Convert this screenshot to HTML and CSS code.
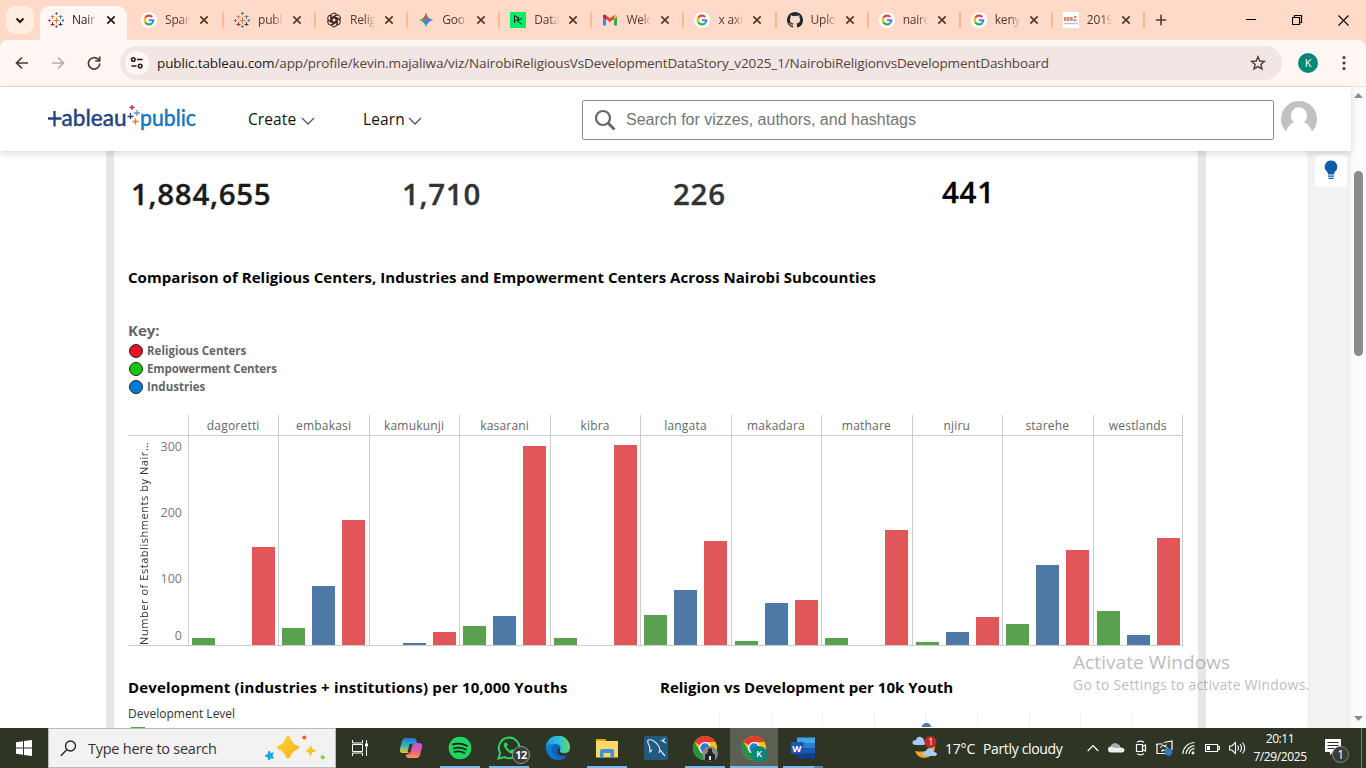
FILE: index.html
```html
<!DOCTYPE html>
<html lang="en">
<head>
<meta charset="utf-8">
<title>Nairobi Religion vs Development Dashboard</title>
<link rel="stylesheet" href="styles.css">
</head>
<body>
<svg class="defs" aria-hidden="true">
  <symbol id="x" viewBox="0 0 10 10"><path d="M1.300 1.300l7.400 7.400M8.700 1.300L1.300 8.700" stroke="currentColor" stroke-width="1.700"/></symbol>
  <symbol id="tab" viewBox="0 0 16 16"><g fill="none" stroke-width="1"><path d="M8.500 5.500v6M5.500 8.500h6" stroke="#e8762d"/><path d="M4.500 3v4M2.500 4.500h4" stroke="#d98b4d"/><path d="M12.500 3v4M10.500 4.500h4" stroke="#59879b"/><path d="M4.500 10v4M2.500 12.500h4" stroke="#c72035"/><path d="M12.500 10v4M10.500 12.500h4" stroke="#1f457e"/><path d="M8.500 0v3M7 1.500h3M15 7v3M13.500 8.500h2.500" stroke="#5f7290"/><path d="M1.500 7v3M0 8.500h3M8.500 13v3M7 14.500h3" stroke="#6b7e99"/></g></symbol>
  <symbol id="g" viewBox="0 0 48 48"><circle cx="24" cy="24" r="24" fill="#fff"/><g fill="none" stroke-width="6.500"><path d="M33.500 15A13 13 0 0 0 12.700 17.500" stroke="#ea4335"/><path d="M12.700 17.500a13 13 0 0 0 0 13" stroke="#fbbc05"/><path d="M12.700 30.500A13 13 0 0 0 33 33.500" stroke="#34a853"/><path d="M33 33.500A13 13 0 0 0 37 24.700H24" stroke="#4285f4"/></g></symbol>
  <symbol id="chrome" viewBox="0 0 24 24"><circle cx="12" cy="12" r="12" fill="#fbc116"/><path d="M12 12L1.600 6A12 12 0 0 1 22.400 6H12z" fill="#e33b2e"/><path d="M1.600 6A12 12 0 0 0 12 24l5.200-9L6.800 15z" fill="#229342"/><path d="M12 6h10.400l-3 5z" fill="#fbc116"/><circle cx="12" cy="12" r="6" fill="#fff"/><circle cx="12" cy="12" r="4.700" fill="#2b78e8"/></symbol>
</svg>

<header class="tabstrip">
  <div class="tab-search"><svg width="10" height="7" viewBox="0 0 10 7"><path d="M1.500 1.500L5 5l3.500-3.500" fill="none" stroke="#221a15" stroke-width="2"/></svg></div>
  <div class="tab active"><svg class="fav"><use href="#tab"/></svg><span>Nair</span><svg class="close"><use href="#x"/></svg></div>
  <div class="tab"><svg class="fav"><use href="#g"/></svg><span>Spar</span><svg class="close"><use href="#x"/></svg></div>
  <div class="tab"><svg class="fav"><use href="#tab"/></svg><span>publ</span><svg class="close"><use href="#x"/></svg></div>
  <div class="tab"><svg class="fav" viewBox="0 0 16 16"><g fill="none" stroke="#3e3029" stroke-width="1.100"><path id="petal" d="M5 9.700V4.200a3 3 0 0 1 5.600-1.500L6 5.500v5"/><use href="#petal" transform="rotate(60 8 8)"/><use href="#petal" transform="rotate(120 8 8)"/><use href="#petal" transform="rotate(180 8 8)"/><use href="#petal" transform="rotate(240 8 8)"/><use href="#petal" transform="rotate(300 8 8)"/></g></svg><span>Relig</span><svg class="close"><use href="#x"/></svg></div>
  <div class="tab"><svg class="fav" viewBox="0 0 16 16"><defs><linearGradient id="gem" x1="0" y1="0.300" x2="1" y2="0.600"><stop offset="0" stop-color="#f4c12c"/><stop offset=".35" stop-color="#39a36a"/><stop offset=".6" stop-color="#3b83f2"/><stop offset="1" stop-color="#4b7df0"/></linearGradient></defs><path d="M8 .5Q9.200 6.800 15.500 8 9.200 9.200 8 15.500 6.800 9.200.5 8 6.800 6.800 8 .5z" fill="url(#gem)"/><path d="M8 .5Q9.200 6.800 11 7L8 8 6 6Q7.600 4 8 .5z" fill="#e8504a"/></svg><span>Goo</span><svg class="close"><use href="#x"/></svg></div>
  <div class="tab"><svg class="fav" viewBox="0 0 16 16"><path d="M0 0h16v16H0z" fill="#03ef62"/><path d="M4.500 11V3.500L9 6.300 5 9M12 6.200L7.500 9l4.500 3.500M8.500 5v4" fill="none" stroke="#05192d"/></svg><span>Data</span><svg class="close"><use href="#x"/></svg></div>
  <div class="tab"><svg class="fav" viewBox="0 0 16 16"><path d="M1 4v9.500h3V7z" fill="#4285f4"/><path d="M12 7v6.500h3V4z" fill="#34a853"/><path d="M1 5V3.500Q2 2 4 3.200L8 6.300l4-3.100V7l-4 3-4-3z" fill="#ea4335"/><path d="M12 3.200Q14 2 15 3.500V5l-3 2.200z" fill="#fbbc04"/><path d="M1 5V3.500Q2 2 4 3.200v4z" fill="#c5221f"/></svg><span>Welc</span><svg class="close"><use href="#x"/></svg></div>
  <div class="tab"><svg class="fav"><use href="#g"/></svg><span>x axi</span><svg class="close"><use href="#x"/></svg></div>
  <div class="tab"><svg class="fav" viewBox="0 0 16 16"><path fill="#24292f" d="M8 0C3.580 0 0 3.580 0 8c0 3.540 2.290 6.530 5.470 7.590.4.070.55-.17.55-.38 0-.19-.01-.82-.01-1.490-2.010.37-2.530-.49-2.690-.94-.09-.23-.48-.94-.82-1.130-.28-.15-.68-.52-.01-.53.63-.01 1.080.58 1.230.82.72 1.210 1.870.87 2.330.66.07-.52.28-.87.51-1.070-1.780-.2-3.640-.89-3.640-3.950 0-.87.31-1.590.82-2.150-.08-.2-.36-1.020.08-2.120 0 0 .67-.21 2.200.82a7.600 7.600 0 0 1 4 0c1.530-1.040 2.200-.82 2.200-.82.44 1.100.16 1.920.08 2.120.51.56.82 1.270.82 2.150 0 3.070-1.870 3.750-3.650 3.950.29.25.54.73.54 1.480 0 1.070-.01 1.930-.01 2.200 0 .21.15.46.55.38A8.010 8.010 0 0 0 16 8c0-4.420-3.580-8-8-8z"/></svg><span>Uplo</span><svg class="close"><use href="#x"/></svg></div>
  <div class="tab"><svg class="fav"><use href="#g"/></svg><span>nairo</span><svg class="close"><use href="#x"/></svg></div>
  <div class="tab"><svg class="fav"><use href="#g"/></svg><span>keny</span><svg class="close"><use href="#x"/></svg></div>
  <div class="tab"><svg class="fav" viewBox="0 0 16 16"><path d="M0 0h16v16H0z" fill="#fff"/><path d="M1 6h9M1 8h13M11 5h3" stroke="#c9664f" stroke-width="1.600" stroke-dasharray="2.500 .6"/><path d="M1 11.500h14" stroke="#c0c5c9" stroke-width="1.500"/></svg><span>2019</span><svg class="close"><use href="#x"/></svg></div>
  <svg class="newtab" viewBox="0 0 12 12"><path d="M6 .8v10.400M.8 6h10.400" stroke="#54382a" stroke-width="1.600"/></svg>
  <div class="winctl">
    <svg width="11" height="11"><path d="M0 4.500h10" stroke="#000"/></svg>
    <svg width="11" height="11"><path d="M.5 2.500h7v7h-7zM2.500 2.500v-2h7v7h-2" fill="none" stroke="#000" stroke-width="1.200"/></svg>
    <svg width="11" height="11"><path d="M.5.5l10 10M10.500.5l-10 10" stroke="#000" stroke-width="1.100"/></svg>
  </div>
</header>

<div class="toolbar-wrap">
<div class="toolbar">
  <svg class="nav" viewBox="0 0 16 16"><path d="M14 8H3M8 2.500L2.500 8 8 13.500" fill="none" stroke="#54382a" stroke-width="1.700"/></svg>
  <svg class="nav" viewBox="0 0 16 16"><path d="M2 8h11M8 2.500L13.500 8 8 13.500" fill="none" stroke="#b9aca7" stroke-width="1.700"/></svg>
  <svg class="nav" viewBox="0 0 16 16"><path d="M13.800 8.500A5.700 5.700 0 1 1 12 4.200l1.300 1.200M13.700 1.500V6H9.200" fill="none" stroke="#54382a" stroke-width="1.700"/></svg>
  <div class="omnibox">
    <div class="site"><svg width="14" height="14" viewBox="0 0 14 14"><g fill="none" stroke="#221a15" stroke-width="1.500"><circle cx="3.300" cy="3.500" r="1.800"/><path d="M7 3.500h5.500M1.500 10h5"/><circle cx="10.200" cy="10" r="1.800"/></g></svg></div>
    <span class="url"><b>public.tableau.com</b>/app/profile/kevin.majaliwa/viz/NairobiReligiousVsDevelopmentDataStory_v2025_1/NairobiReligionvsDevelopmentDashboard</span>
    <svg class="star" viewBox="0 0 16 16"><path d="M8 1.800l1.800 4.200 4.600.4-3.500 3 1.100 4.500L8 11.500l-4 2.400 1.100-4.500-3.500-3 4.600-.4z" fill="none" stroke="#54433b" stroke-width="1.500"/></svg>
  </div>
  <div class="profile">K</div>
  <svg class="menu" viewBox="0 0 4 16"><g fill="#54382a"><circle cx="2" cy="2.500" r="1.600"/><circle cx="2" cy="8" r="1.600"/><circle cx="2" cy="13.500" r="1.600"/></g></svg>
</div>
</div>

<div class="page">
  <div class="site-col">
    <div class="site-header">
      <svg class="logo" viewBox="0 0 150 30">
        <path d="M0 14.500h13.500M6.500 7v15.500" stroke="#1f457e" stroke-width="2.300"/>
        <text class="lt" x="13.500" y="22" textLength="65" lengthAdjust="spacingAndGlyphs" fill="#1f457e" stroke="#1f457e">ableau</text>
        <text class="lt" x="92" y="22" textLength="56" lengthAdjust="spacingAndGlyphs" fill="#1b75bb" stroke="#1b75bb">public</text>
        <g fill="none" stroke-width="1.300"><path d="M84 1v5M81.500 3.500h5" stroke="#c72035"/><path d="M89 6v6M86 9h6" stroke="#5a9bc0"/><path d="M82.500 9v6M79.500 12.500h6" stroke="#1f457e"/><path d="M87.500 14.500v6M84.500 17.500h6" stroke="#e8762d"/></g>
      </svg>
      <span class="navlink create">Create</span><svg class="chev" viewBox="0 0 14 8"><path d="M1 1l6 6 6-6" fill="none" stroke="#555" stroke-width="1.300"/></svg>
      <span class="navlink learn">Learn</span><svg class="chev" viewBox="0 0 14 8"><path d="M1 1l6 6 6-6" fill="none" stroke="#555" stroke-width="1.300"/></svg>
      <div class="search"><svg width="22" height="22" viewBox="0 0 22 22"><circle cx="9" cy="9" r="7" fill="none" stroke="#666" stroke-width="2.200"/><path d="M14 14l6.500 6.500" stroke="#666" stroke-width="2.800"/></svg><span>Search for vizzes, authors, and hashtags</span></div>
      <svg class="avatar" viewBox="0 0 36 36"><circle cx="18" cy="18" r="18" fill="#c1c1c1"/><circle cx="18" cy="14.500" r="8.200" fill="#fff"/><path d="M4.500 31.500Q8 22 14 21h8q6 1 9.500 10.500L29 36H7z" fill="#fff"/></svg>
    </div>
    <main class="viewer">
      <section class="dash">
        <div class="kpis"><span class="k1">1,884,655</span><span class="k2">1,710</span><span class="k3">226</span><span class="k4">441</span></div>
        <h2 class="t1">Comparison of Religious Centers, Industries and Empowerment Centers Across Nairobi Subcounties</h2>
        <div class="key">
          <div class="key-title">Key:</div>
          <div><i class="red"></i><span class="l1">Religious Centers</span></div>
          <div><i class="green"></i><span class="l2">Empowerment Centers</span></div>
          <div><i class="blue"></i><span class="l3">Industries</span></div>
        </div>
        <div class="chart">
          <div class="axis">
            <div class="ylabel"><span>Number of Establishments by Nair…</span></div>
            <div class="ticks"><span>300</span><span>200</span><span>100</span><span class="zero">0</span></div>
          </div>
          <div class="cols">
            <div class="col"><h4>dagoretti</h4><div class="bars"><i style="height:7px"></i><i style="height:0"></i><i style="height:98px"></i></div></div>
            <div class="col"><h4>embakasi</h4><div class="bars"><i style="height:17px"></i><i style="height:59px"></i><i style="height:125px"></i></div></div>
            <div class="col"><h4>kamukunji</h4><div class="bars"><i style="height:0"></i><i style="height:2px"></i><i style="height:13px"></i></div></div>
            <div class="col"><h4>kasarani</h4><div class="bars"><i style="height:19px"></i><i style="height:29px"></i><i style="height:199px"></i></div></div>
            <div class="col"><h4>kibra</h4><div class="bars"><i style="height:7px"></i><i style="height:0"></i><i style="height:200px"></i></div></div>
            <div class="col"><h4>langata</h4><div class="bars"><i style="height:30px"></i><i style="height:55px"></i><i style="height:104px"></i></div></div>
            <div class="col"><h4>makadara</h4><div class="bars"><i style="height:4px"></i><i style="height:42px"></i><i style="height:45px"></i></div></div>
            <div class="col"><h4>mathare</h4><div class="bars"><i style="height:7px"></i><i style="height:0"></i><i style="height:115px"></i></div></div>
            <div class="col"><h4>njiru</h4><div class="bars"><i style="height:3px"></i><i style="height:13px"></i><i style="height:28px"></i></div></div>
            <div class="col"><h4>starehe</h4><div class="bars"><i style="height:21px"></i><i style="height:80px"></i><i style="height:95px"></i></div></div>
            <div class="col"><h4>westlands</h4><div class="bars"><i style="height:34px"></i><i style="height:10px"></i><i style="height:107px"></i></div></div>
          </div>
        </div>
        <div class="lower">
          <div class="lower-left">
            <h2 class="t2">Development (industries + institutions) per 10,000 Youths</h2>
            <div class="level">Development Level</div>
            <div class="swatch"></div>
          </div>
          <div class="lower-right">
            <h2 class="t3">Religion vs Development per 10k Youth</h2>
            <svg class="scatter" width="520" height="16"><path d="M59.500 0v16M111.500 0v16M162.500 0v16M214.500 0v16M265.500 0v16M317.500 0v16M369.500 0v16M420.500 0v16M472.500 0v16" stroke="#f0f0f0"/><circle cx="266.500" cy="17" r="5" fill="#4e79a7"/></svg>
          </div>
        </div>
      </section>
      <aside class="panel"><div class="bulb"><svg width="14" height="20" viewBox="0 0 14 20"><path d="M7 .5a6.300 6.300 0 0 0-3.800 11.300Q3.800 12.500 4 14.500h6q.2-2 .8-2.700A6.300 6.300 0 0 0 7 .5z" fill="#0b5cab"/><path d="M4 16.200h6M4.500 18.400h5" stroke="#0b5cab" stroke-width="1.200"/></svg></div></aside>
    </main>
  </div>
  <div class="scrollbar">
    <svg width="9" height="5"><path d="M0 5L4.500 0 9 5z" fill="#8b8b8b"/></svg>
    <div class="track"><div class="thumb"></div></div>
    <svg width="9" height="5"><path d="M0 0h9L4.500 5z" fill="#8b8b8b"/></svg>
  </div>
</div>
<div class="watermark"><p class="w1">Activate Windows</p><p class="w2">Go to Settings to activate Windows.</p></div>

<footer class="taskbar">
  <div class="start"><svg width="16" height="16" viewBox="0 0 16 16"><path d="M0 2.200L7 1.200v6.300H0zM8 1.100L16 0v7.500H8zM0 8.500h7v6.300l-7-1zM8 8.500h8V16l-8-1.100z" fill="#fff"/></svg></div>
  <div class="tsearch">
    <svg width="17" height="17" viewBox="0 0 17 17"><circle cx="10.500" cy="6" r="5" fill="none" stroke="#222" stroke-width="1.300"/><path d="M7 9.500L.8 15.700" stroke="#222" stroke-width="1.300"/></svg>
    <span>Type here to search</span>
    <svg width="62" height="26" viewBox="0 0 62 26"><defs><linearGradient id="gold" x2="1" y2="1"><stop offset="0" stop-color="#ffd83d"/><stop offset="1" stop-color="#f5ad16"/></linearGradient></defs><path d="M24 .5q1.500 0 2 2 2 6 8 8.500 3 1.500 0 3-6 2.500-8 8-2 3.500-4 0-2-5.500-8-8-3-1.500 0-3 6-2.500 8-8.500.5-2 2-2z" fill="url(#gold)"/><path d="M46.500 10l1.800 3.800 4 1.900-4 1.900-1.800 4.200-1.800-4.200-4-1.900 4-1.900z" fill="url(#gold)"/><path d="M5 16l1.500 2.500 2.800-.6L8 20.500l1.500 2.700-2.700-.4L4.700 25l-.5-2.700L1 20.800l3-1.400z" fill="#14a4ea" stroke="#14a4ea"/><circle cx="40.300" cy="2.500" r="2.100" fill="#f0622c"/><circle cx="58.700" cy="22.300" r="2.100" fill="#8bcf4a"/></svg>
  </div>
  <div class="tb"><svg width="16" height="16" viewBox="0 0 16 16"><path d="M.5 0v3h10V0M.5 16v-3h10v3M.5 4.500h10v7H.5zM14.500 0v4M14.500 7v9" fill="none" stroke="#fff"/><path d="M13 3.500h3v3h-3z" fill="#fff"/></svg></div>
  <div class="apps">
    <div class="app"><svg width="24" height="24" viewBox="0 0 24 24"><defs><linearGradient id="cpa" x2="0" y2="1"><stop offset="0" stop-color="#1a75e0"/><stop offset=".5" stop-color="#31b6b5"/><stop offset="1" stop-color="#f1c62b"/></linearGradient><linearGradient id="cpb" x2="0" y2="1"><stop offset="0" stop-color="#b05be8"/><stop offset=".55" stop-color="#ee5a8f"/><stop offset="1" stop-color="#f79a52"/></linearGradient></defs><path d="M6 2h9q2 0 2.500 3l.5 2h-3q-2 0-2.500 2l-2 7q-.5 1-2 1H4q-4 0-3-4.500L3 5q1-3 3-3z" fill="url(#cpa)"/><path d="M18 22H9q-1.500 0-2.500-3l2.500-1q2 0 2.500-2l2-8q.5-1 2-1H20q4 0 3 4.500L21 19q-1 3-3 3z" fill="url(#cpb)"/><path d="M10.500 8h3l-2.200 8H8.600z" fill="#2f3525"/></svg></div>
    <div class="app run"><svg width="24" height="24" viewBox="0 0 24 24"><circle cx="12" cy="12" r="11.300" fill="#1ed760"/><path d="M5 8.500q7-2.200 14 1.300M5.800 12.300q6-1.800 12 1.200M6.500 15.800q5-1.300 10 1" fill="none" stroke="#16241a" stroke-width="1.900" stroke-linecap="round"/></svg></div>
    <div class="app run"><svg width="24" height="24" viewBox="0 0 24 24"><path d="M1.500 22.500l1.600-5.700A10.300 10.300 0 1 1 7.300 21z" fill="none" stroke="#25d366" stroke-width="2"/><path d="M8 6.500q-2 1.500-1 4 2 5 7 7 3 .5 3.500-2v-1L15 13l-1.500 1.500Q10.500 13 9.500 10.500L11 9 9.500 6.500z" fill="#25d366"/></svg><b class="count">12</b></div>
    <div class="app"><svg width="24" height="24" viewBox="0 0 24 24"><defs><linearGradient id="edge" x2="1"><stop offset="0" stop-color="#1b9de2"/><stop offset=".6" stop-color="#35c1d0"/><stop offset="1" stop-color="#68dc5c"/></linearGradient></defs><circle cx="12" cy="12" r="12" fill="#0f65bc"/><path d="M0 12A12 12 0 0 1 24 11q0 6-6 6-5 0-4-3 2-6-5-6Q2 8 0 14z" fill="url(#edge)"/><path d="M14 14q-1 3 4 3.500 3 0 5-1.500l1 2-3 2q-6 1-9-2-2-4 1-6 2 0 1 2z" fill="#2f3525"/><path d="M0 12q2-5 8-3-4 4-1 9 3 5 9 5Q3 26 0 12z" fill="#0d7bd3"/></svg></div>
    <div class="app run"><svg width="24" height="24" viewBox="0 0 24 24"><path d="M1 3h9l2 2h11v16H1z" fill="#e8a317"/><path d="M1 5h22v16.500H1z" fill="#ffd867"/><path d="M5 21.500V15q0-2 2-2h10q2 0 2 2v6.500h-3.500V17h-7v4.500z" fill="#3a94d8"/></svg></div>
    <div class="app"><svg width="24" height="24" viewBox="0 0 24 24"><rect width="24" height="24" rx="2" fill="#235a80"/><path d="M4 4q4-1 7 2 4 3 5 8l5 6M4 4q-1 2 1.500 6l.5 6 2-2M17 4l5 3M20.500 2l-1.500 4M16 14l-1 3" fill="none" stroke="#d9e6ee" stroke-width="1.200"/></svg></div>
    <div class="app run"><svg width="24" height="24"><use href="#chrome"/></svg><svg class="badge" viewBox="0 0 16 16"><circle cx="8" cy="8" r="8" fill="#888"/><path d="M3 14V9l3-3V2.500h4V6l3 3v5q-5 3-10 0z" fill="#242424"/><path d="M8 10v4" stroke="#ddd" stroke-width="2"/></svg></div>
    <div class="app run on"><svg width="24" height="24"><use href="#chrome"/></svg><b class="badge k">K</b></div>
    <div class="app run word"><svg width="24" height="24" viewBox="0 0 24 24"><path d="M6 1.500h18V7H6z" fill="#41a5ee"/><path d="M6 7h18v5.300H6z" fill="#2b7cd3"/><path d="M6 12.300h18v5H6z" fill="#185abd"/><path d="M6 17h18v5.500H6z" fill="#103f91"/><path d="M0 6h12.500v12H0z" fill="#1b56b5"/><text x="1.300" y="15.500" class="wtext">W</text></svg></div>
  </div>
  <div class="weather"><svg width="26" height="24" viewBox="0 0 26 24"><path d="M18 6q3 12-15 9 2 7 10 7 10-2 10-11-1-4-5-5z" fill="#f4a32d"/><path d="M4 9q-4 0-3.500-3Q1 4 4 4q1-4 5-3 3 1 3 4 2 1 1 3l-1 1zM13 20q-3-1-2-3 1-2 3-2 1-3 4-3t4 4q3 0 3 2.500-1 2-3 1.500z" fill="#a9c9f7"/><circle cx="18.500" cy="6" r="6" fill="#c42b1c"/><text x="16.300" y="9.300" class="alert">1</text></svg><span class="temp">17°C</span><span class="sky">Partly cloudy</span></div>
  <div class="tray">
    <svg style="width:12px" viewBox="0 0 12 16"><path d="M.7 11L6 5.500l5.300 5.500" fill="none" stroke="#fff" stroke-width="1.200"/></svg>
    <svg style="width:17px" viewBox="0 0 17 16"><path d="M3 12.500q-3 0-3-3T3 6.500q2-4 6-2.500 3 1 3.500 3.500 4 0 4 2.800 0 2.200-2.500 2.200z" fill="#eee"/><path d="M2 6.500q3-5 8-2.500 2 1 2.500 3.500L8 8z" fill="#aaa"/></svg>
    <svg style="width:12px" viewBox="0 0 12 16"><path d="M1.500 4.500h6v7h-6zM7.500 6.500l3-1.500v6l-3-1.500M2 2.200q3.500-2 7 0M2 13.800q3.500 2 7 0" fill="none" stroke="#fff" stroke-width="1.200"/></svg>
    <svg style="width:17px" viewBox="0 0 17 16"><path d="M8 2.500l8-1.500v9M1 4h6M1 4v9.500h8M1 4l-1 1" fill="none" stroke="#fff" stroke-width="1.200"/><path d="M4.500 8q0-2.500 3.500-2.500l2 1M11 7q0 4-5 3.500M10 4.500v2H8M6 12v-2h2" fill="none" stroke="#fff"/><circle cx="12.500" cy="12" r="3.700" fill="#2e7cc9"/></svg>
    <svg style="width:13px" viewBox="0 0 13 16"><g fill="none" stroke="#eee" stroke-width="1.200"><path d="M.8 14A12 12 0 0 1 12.500 2.500M4 14a9 9 0 0 1 8.500-8.300M7 14a6 6 0 0 1 5.500-5.300"/></g><circle cx="11" cy="13" r="1.400" fill="#fff"/></svg>
    <svg style="width:15px" viewBox="0 0 15 16"><path d="M.6 4.500h12v7H.6zM12.600 6.500h1.700v3h-1.700" fill="none" stroke="#fff" stroke-width="1.100"/><path d="M2 6h3v4H2z" fill="#fff"/></svg>
    <svg style="width:17px" viewBox="0 0 17 16"><path d="M.6 6h2.200L6.500 2.500v11L2.800 10H.6zM8.500 5.500q2 2.500 0 5M11 4q3 4 0 8M13.500 2.500q4.500 5.500 0 11" fill="none" stroke="#fff" stroke-width="1.100"/></svg>
  </div>
  <div class="clock"><div class="time">20:11</div><div class="date">7/29/2025</div></div>
  <div class="notif"><svg width="26" height="26" viewBox="0 0 26 26"><path d="M1 2h16v13h-8l-3 3v-3H1z" fill="#fff"/><path d="M3.500 5.500h11M3.500 8.500h11M3.500 11.500h7" stroke="#2c3222" stroke-width="1.200"/><circle cx="16.500" cy="17.500" r="8" fill="#3a3d35" stroke="#85887f"/><text x="13.300" y="22" class="nnum">1</text></svg></div>
  <div class="peek"></div>
</footer>
</body>
</html>
```
FILE: styles.css
```css
* { box-sizing: border-box; }
html, body { margin: 0; height: 768px; overflow: hidden; }
body { display: flex; flex-direction: column; width: 1366px; background: #fff; font-family: "Open Sans", "Noto Sans", sans-serif; }
h2, h4, p { margin: 0; }
svg { display: block; flex: none; }
.defs { width: 0; height: 0; position: absolute; }

.tabstrip { display: flex; align-items: flex-start; flex: none; height: 40px; background: #ffdac8; padding-left: 6px; }
.tab-search { flex: none; width: 28px; height: 28px; margin: 6px 6px 0 0; border-radius: 9px; background: #ffece3; display: flex; align-items: center; justify-content: center; }
.tab { display: flex; align-items: center; width: 92.100px; height: 16px; margin-top: 12px; padding-left: 10px; border-right: 2px solid #ffb78c; color: #54382a; flex: none; }
.tab span { flex: none; width: 30px; margin-left: 8px; white-space: nowrap; font-size: 12px; line-height: 16px; letter-spacing: -.2px; -webkit-mask-image: linear-gradient(90deg, #000 50%, transparent 84%); mask-image: linear-gradient(90deg, #000 50%, transparent 84%); }
.fav { width: 16px; height: 16px; }
.close { width: 10px; height: 10px; margin-left: 4px; }
.tab.active { width: 87px; height: 34px; margin: 6px 5px 0 0; padding: 0 0 6px 8px; background: #fff7f3; border: 0; border-radius: 10px 10px 0 0; color: #221a15; }
.tab.active + .tab { width: 92px; padding-left: 9px; }
.newtab { width: 12px; height: 12px; margin: 14px 0 0 10px; }
.winctl { display: flex; gap: 35px; margin: 15px 0 0 auto; padding-right: 17px; }

.toolbar-wrap { flex: none; background: #ffdac8; }
.toolbar { display: flex; align-items: center; height: 47px; padding: 0 0 1px 14px; background: linear-gradient(#fff7f3 46px, #f3dcd4 46px); border-radius: 8px 8px 0 0; }
.nav { width: 16px; height: 16px; margin-right: 20px; }
.omnibox { display: flex; align-items: center; width: 1162px; height: 34px; margin-left: -2px; padding-left: 5px; border-radius: 17px; background: #f2e6e4; }
.site { width: 24px; height: 24px; border-radius: 50%; background: #fff7f3; display: flex; align-items: center; justify-content: center; }
.url { margin-left: 8px; flex: 1; font-size: 13.500px; letter-spacing: -.12px; white-space: nowrap; color: #54433b; }
.url b { font-weight: 400; color: #221a15; }
.star { width: 16px; height: 16px; margin-right: 16px; }
.profile { width: 20px; height: 20px; margin-left: 16px; border-radius: 50%; background: #00897b; color: #fff; font-size: 11px; line-height: 20px; text-align: center; }
.menu { width: 4px; height: 16px; margin-left: 24px; }

.page { display: flex; flex: none; height: 641px; }
.site-col { width: 1351px; }
.site-header { position: relative; display: flex; align-items: center; height: 64px; padding-left: 48px; background: #fff; box-shadow: 0 2px 7px rgba(0,0,0,.16); z-index: 1; }
.logo { width: 150px; height: 30px; margin-top: -1px; }
.lt { font: 400 22.500px Lato, sans-serif; stroke-width: .5px; }
.navlink { font-size: 15.500px; color: #111; white-space: nowrap; letter-spacing: .1px; }
.create { margin-left: 50px; width: 53px; }
.learn { margin-left: 48px; width: 45px; }
.chev { width: 14px; height: 8px; margin-top: 3px; }
.search { display: flex; align-items: center; width: 692px; height: 40px; margin-left: 160px; margin-top: 1px; padding-left: 11px; border: 1px solid #8a8a8a; border-radius: 2px; color: #757575; font: 16px "Liberation Sans", Arial, sans-serif; }
.search span { margin-left: 10px; }
.avatar { width: 36px; height: 36px; margin-left: 7px; }

.viewer { display: flex; height: 577px; padding-left: 106px; overflow: hidden; }
.dash { width: 1100px; border: solid #e6e6e6; border-width: 0 8px; padding: 22px 0 0 14px; }
.kpis { display: grid; grid-template-columns: 271px 271px 269px 1fr; height: 80px; padding-left: 3px; font-size: 29.500px; line-height: 42px; font-weight: 600; color: #333; white-space: nowrap; letter-spacing: .7px; -webkit-text-stroke: .3px currentColor; }
.k1 { color: #1b1b1b; }
.k4 { color: #000; margin-top: -2px; }
.dash h2 { font-size: 15px; line-height: 24px; font-weight: 700; color: #000; white-space: nowrap; margin-top: 12px; }
.dash .t1 { letter-spacing: .05px; }
.dash .t2 { letter-spacing: .17px; }
.dash .t3 { letter-spacing: .01px; }
.key { margin-top: 28px; font-size: 12px; font-weight: 700; color: #666; }
.key-title { font-size: 15px; line-height: 26px; height: 25px; }
.key div + div { display: flex; align-items: center; height: 18px; line-height: 16px; }
.key i { width: 14px; height: 14px; margin: 0 4px 0 1px; border: 1px solid #222; border-radius: 50%; }
.key span { font-size: 11.500px; }
.l1, .l3 { letter-spacing: 0; }
.l2 { letter-spacing: -.12px; }
.red { background: #e81224; }
.green { background: #16c60c; }
.blue { background: #0078d7; }
.chart { display: flex; height: 231px; margin-top: 19px; }
.axis { flex: none; display: flex; width: 60px; height: 211px; margin-top: 20px; border: solid #ccc; border-width: 1px 0; }
.ylabel { width: 32px; display: flex; align-items: flex-end; justify-content: center; }
.ylabel span { writing-mode: vertical-rl; transform: rotate(180deg); font-size: 11px; line-height: 14px; letter-spacing: .55px; white-space: nowrap; color: #333; }
.ticks { width: 22px; text-align: right; font-size: 12.500px; line-height: 20px; color: #777; font-weight: 400; letter-spacing: 0; display: grid; grid-template-rows: 66px 66px 57px 20px; padding-top: 1px; }
.cols { flex: none; display: grid; grid-template-columns: repeat(11, 90.460px); border-right: 1px solid #ccc; width: 995px; }
.col { border-left: 1px solid #ccc; border-bottom: 1px solid #ccc; }
.col h4 { height: 21px; border-bottom: 1px solid #ccc; text-align: center; font-size: 12px; line-height: 22px; font-weight: 400; color: #666; letter-spacing: .2px; padding-right: 1px; }
.bars { display: flex; align-items: flex-end; gap: 7px; height: 209px; padding-left: 3px; }
.bars i { width: 23px; background: #59a14f; }
.bars i:nth-child(2) { background: #4e79a7; }
.bars i:nth-child(3) { background: #e15759; }
.lower { display: flex; margin-top: 17px; }
.lower-left { width: 532px; }
.level { font-size: 12px; line-height: 18px; margin-top: 6px; color: #333; }
.swatch { width: 14px; height: 14px; margin: 4px 0 0 3px; background: #59a14f; }
.scatter { margin-top: 12px; }
.panel { width: 41px; margin-left: 104px; background: #f2f2f2; padding: 4px 4px; box-shadow: -1px 0 4px rgba(0,0,0,.12); }
.bulb { width: 32px; height: 32px; margin-left: 1px; border-radius: 4px; background: #fff; display: flex; align-items: center; justify-content: center; padding-bottom: 3px; }
.scrollbar { display: flex; flex-direction: column; align-items: center; width: 15px; padding: 6px 0 7px; background: #fcfcfc; }
.track { flex: 1; padding-top: 73px; }
.thumb { width: 9px; height: 185px; border-radius: 5px; background: #8b8b8b; }
.watermark { position: absolute; left: 1073px; top: 649px; color: rgba(130,130,130,.55); white-space: nowrap; }
.w1 { font-size: 19px; line-height: 26px; letter-spacing: .08px; }
.w2 { font-size: 14px; line-height: 20px; letter-spacing: .2px; }

.taskbar { display: flex; flex: none; height: 40px; background: #2f3525; color: #fff; }
.start { flex: none; width: 48px; padding: 12px 16px; }
.tsearch { flex: none; display: flex; align-items: center; width: 288px; height: 40px; padding: 0 9px 0 11px; background: #f2f2f2; border: 1px solid #b9b9b9; color: #333; font-size: 14.500px; letter-spacing: -.25px; }
.tsearch span { flex: 1; margin-left: 11px; white-space: nowrap; }
.tb { flex: none; width: 50px; padding: 12px 16px; }
.apps { flex: none; display: flex; }
.app { position: relative; width: 49px; height: 40px; display: flex; align-items: center; justify-content: center; }
.app.run::after { content: ""; position: absolute; left: 5px; right: 4px; bottom: 0; height: 2px; background: #76b9ed; }
.app.on { background: linear-gradient(90deg, transparent 1px, #5c6053 1px); }
.app.on::after { left: 1px; right: 0; }
.app.word::after { background: linear-gradient(90deg, #76b9ed 31px, #5784a5 31px); }
.badge { position: absolute; left: 22px; top: 18px; width: 16px; height: 16px; border-radius: 50%; }
.badge.k { background: #00897b; font-size: 9px; line-height: 16px; text-align: center; font-weight: 600; }
.count { position: absolute; left: 28px; top: 18px; width: 18px; height: 18px; border: 1px solid #999; border-radius: 9px; background: #3a3d35; font-size: 11px; line-height: 16px; text-align: center; letter-spacing: -.5px; }
.wtext { font: 700 9.500px "Open Sans", sans-serif; fill: #fff; }
.weather { flex: none; display: flex; align-items: center; margin-left: 85px; font-size: 14px; white-space: nowrap; }
.alert { font: 9px "Open Sans", sans-serif; fill: #fff; }
.temp { margin-left: 7px; width: 38px; letter-spacing: -.2px; }
.sky { width: 104px; letter-spacing: -.35px; }
.tray { flex: none; display: flex; align-items: center; justify-content: space-between; width: 159px; }
.tray svg { height: 16px; }
.clock { flex: none; width: 64px; margin-left: 2px; font-size: 12px; line-height: 18px; text-align: center; letter-spacing: -.4px; padding-top: 2px; }
.notif { margin: 9px 0 0 12px; }
.nnum { font: 12px "Open Sans", sans-serif; fill: #fff; }
.peek { margin-left: auto; margin-right: 4px; width: 1px; background: #777b70; }
```
